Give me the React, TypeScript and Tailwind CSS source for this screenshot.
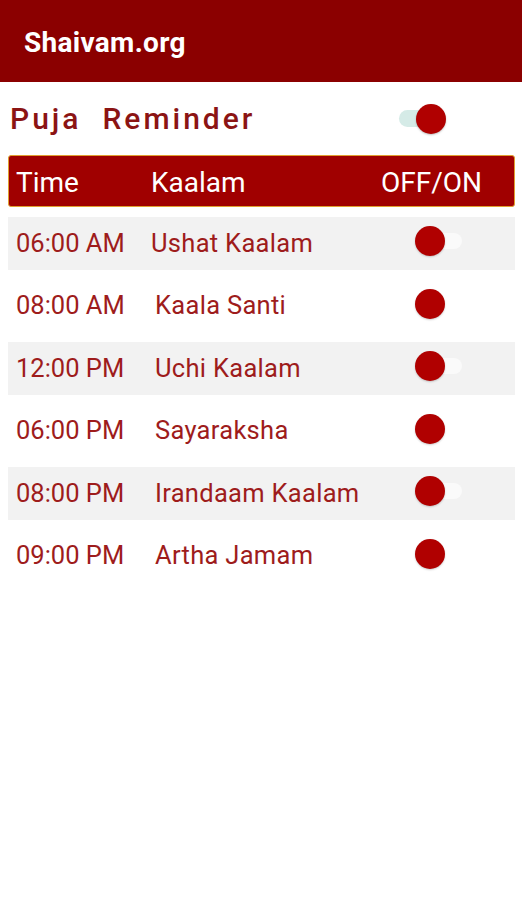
import { useState } from "react";

interface Kaalam {
  time: string;
  name: string;
  shift?: boolean;
}

const KAALAMS: Kaalam[] = [
  { time: "06:00 AM", name: "Ushat Kaalam", shift: true },
  { time: "08:00 AM", name: "Kaala Santi" },
  { time: "12:00 PM", name: "Uchi Kaalam" },
  { time: "06:00 PM", name: "Sayaraksha" },
  { time: "08:00 PM", name: "Irandaam Kaalam" },
  { time: "09:00 PM", name: "Artha Jamam" },
];

function Toggle({ on, onClick }: { on: boolean; onClick: () => void }) {
  if (on) {
    return (
      <button onClick={onClick} className="relative w-[47px] h-[30px] shrink-0">
        <span className="absolute left-0 top-[6px] w-[40px] h-[17px] rounded-full bg-[#d5ebe7]" />
        <span className="absolute right-0 top-0 w-[30px] h-[30px] rounded-full bg-[#b00000] shadow-[0_1px_2px_rgba(0,0,0,0.25)]" />
      </button>
    );
  }
  return (
    <button onClick={onClick} className="relative w-[47px] h-[30px] shrink-0">
      <span className="absolute right-0 top-[7px] w-[40px] h-[16px] rounded-full bg-white/60" />
      <span className="absolute left-0 top-0 w-[30px] h-[30px] rounded-full bg-[#b00000] shadow-[0_1px_2px_rgba(0,0,0,0.2)]" />
    </button>
  );
}

export default function App() {
  const [master, setMaster] = useState(true);
  const [enabled, setEnabled] = useState<boolean[]>(KAALAMS.map(() => false));

  const flip = (i: number) =>
    setEnabled((prev) => prev.map((v, j) => (j === i ? !v : v)));

  return (
    <div className="w-[522px] h-[900px] bg-white font-['Roboto',sans-serif]">
      <header className="h-[82px] bg-[#8b0000] flex items-center pl-[24px] pt-[4px]">
        <h1 className="text-white text-[28px] font-bold tracking-[0.3px] leading-none">Shaivam.org</h1>
      </header>

      <div className="h-[73px] flex items-center justify-between pl-[10px] pr-[76px]">
        <span className="text-[#8b1414] text-[30px] font-medium tracking-[3px] whitespace-pre leading-none">
          {"Puja  Reminder"}
        </span>
        <Toggle on={master} onClick={() => setMaster(!master)} />
      </div>

      <div className="mx-[8px] mr-[7px] h-[52px] bg-[#a00000] border border-[#e0a030] rounded-[3px] flex items-center text-white text-[28px] leading-none pt-[3px]">
        <span className="w-[142px] pl-[7px]">Time</span>
        <span className="flex-1">Kaalam</span>
        <span className="pr-[32px]">OFF/ON</span>
      </div>

      <ul className="mt-[10px] mx-[8px] mr-[7px] flex flex-col gap-[9.5px]">
        {KAALAMS.map((k, i) => (
          <li
            key={k.time}
            className={`h-[53px] flex items-center text-[#9e1c1c] text-[25.5px] leading-none ${
              i % 2 === 0 ? "bg-[#f2f2f2]" : "bg-white"
            }`}
          >
            <span className="w-[147px] pl-[8px]">{k.time}</span>
            <span className={`flex-1 tracking-[0.3px] ${k.shift ? "-ml-[4px]" : ""}`}>{k.name}</span>
            <span className="pr-[53px]">
              <Toggle on={enabled[i]} onClick={() => flip(i)} />
            </span>
          </li>
        ))}
      </ul>
    </div>
  );
}
